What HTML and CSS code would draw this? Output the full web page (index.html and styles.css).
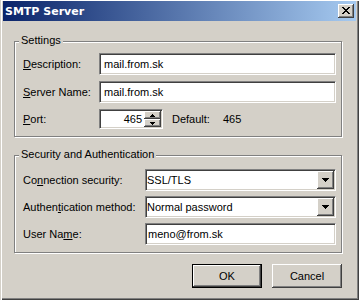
FILE: index.html
```html
<!DOCTYPE html>
<html lang="en">
<head>
    <meta charset="UTF-8">
    <title>SMTP Server</title>
    <link rel="stylesheet" href="styles.css">
</head>
<body>
    <div class="window">
        <div class="titlebar">
            <span class="title">SMTP Server</span>
            <div class="close">
                <svg width="8" height="7" viewBox="0 0 8 7" shape-rendering="crispEdges">
                    <path d="M0 0h2v1h-2zM6 0h2v1h-2zM1 1h2v1h-2zM5 1h2v1h-2zM2 2h4v1h-4zM3 3h2v1h-2zM2 4h4v1h-4zM1 5h2v1h-2zM5 5h2v1h-2zM0 6h2v1h-2zM6 6h2v1h-2z" fill="#000"/>
                </svg>
            </div>
        </div>

        <div class="content">
            <div class="group settings">
                <div class="legend">Settings</div>
                <div class="row">
                    <span class="lbl"><u>D</u>escription:</span>
                    <div class="edit">mail.from.sk</div>
                </div>
                <div class="row">
                    <span class="lbl"><u>S</u>erver Name:</span>
                    <div class="edit">mail.from.sk</div>
                </div>
                <div class="row port">
                    <span class="lbl"><u>P</u>ort:</span>
                    <div class="spin">
                        <span class="val">465</span>
                        <div class="arrows">
                            <div class="arrow-btn">
                                <svg width="5" height="3" viewBox="0 0 5 3" shape-rendering="crispEdges"><path d="M2 0h1v1h1v1h1v1h-5v-1h1v-1h1z" fill="#000"/></svg>
                            </div>
                            <div class="arrow-btn">
                                <svg width="5" height="3" viewBox="0 0 5 3" shape-rendering="crispEdges"><path d="M0 0h5v1h-1v1h-1v1h-1v-1h-1v-1h-1z" fill="#000"/></svg>
                            </div>
                        </div>
                    </div>
                    <span class="default-lbl">Default:</span>
                    <span class="default-val">465</span>
                </div>
            </div>

            <div class="group security">
                <div class="legend">Security and Authentication</div>
                <div class="row">
                    <span class="lbl">Co<u>n</u>nection security:</span>
                    <div class="combo">
                        <span class="combo-text">SSL/TLS</span>
                        <div class="drop">
                            <svg width="7" height="4" viewBox="0 0 7 4" shape-rendering="crispEdges"><path d="M0 0h7v1h-1v1h-1v1h-1v1h-1v-1h-1v-1h-1v-1h-1z" fill="#000"/></svg>
                        </div>
                    </div>
                </div>
                <div class="row">
                    <span class="lbl">Authen<u>t</u>ication method:</span>
                    <div class="combo">
                        <span class="combo-text">Normal password</span>
                        <div class="drop">
                            <svg width="7" height="4" viewBox="0 0 7 4" shape-rendering="crispEdges"><path d="M0 0h7v1h-1v1h-1v1h-1v1h-1v-1h-1v-1h-1v-1h-1z" fill="#000"/></svg>
                        </div>
                    </div>
                </div>
                <div class="row">
                    <span class="lbl">User Na<u>m</u>e:</span>
                    <div class="edit plain">meno@from.sk</div>
                </div>
            </div>

            <div class="buttons">
                <div class="btn default">OK</div>
                <div class="btn">Cancel</div>
            </div>
        </div>
    </div>
</body>
</html>
```

FILE: styles.css
```css
body {
    margin: 0;
    font-family: "Liberation Sans", Arial, sans-serif;
    font-size: 11px;
    color: #000000;
}

/* Dialog frame */
.window {
    width: 359px;
    height: 300px;
    box-sizing: border-box;
    padding: 1px 3px 0 3px;
    background: #d4d0c8;
    box-shadow: inset 1px 0 #d4d0c8, inset 2px 1px #ffffff,
                inset -1px -1px #404040, inset -2px -2px #808080;
}

.titlebar {
    height: 20px;
    display: flex;
    align-items: center;
    justify-content: space-between;
    padding: 0 2px;
    background: linear-gradient(to right, #0a246a, #a6caf0);
    color: #ffffff;
    font: bold 11px "DejaVu Sans", sans-serif;
}

.close {
    width: 16px;
    height: 14px;
    box-sizing: border-box;
    padding: 3px 0 0 4px;
    background: #d4d0c8;
    box-shadow: inset -1px -1px #404040, inset 1px 1px #ffffff,
                inset -2px -2px #808080, inset 2px 2px #d4d0c8;
}

.close svg {
    display: block;
}

.content {
    padding: 20px 14px 0 11px;
}

/* Etched group boxes */
.group {
    position: relative;
    border: 1px solid #808080;
    box-shadow: inset 1px 1px #ffffff, 1px 1px #ffffff;
}

.settings {
    padding: 11px 5px 7px 8px;
}

.security {
    margin-top: 18px;
    padding: 13px 5px 7px 8px;
}

.legend {
    position: absolute;
    top: -8px;
    left: 4px;
    padding: 0 2px;
    line-height: 13px;
    background: #d4d0c8;
}

.row {
    display: flex;
    align-items: center;
    height: 22px;
    margin-bottom: 6px;
}

.security .row {
    margin-bottom: 5px;
}

.group .row:last-child {
    margin-bottom: 0;
}

.row.port {
    height: 20px;
}

.settings .lbl {
    width: 76px;
}

.security .lbl {
    width: 122px;
}

/* Sunken fields */
.edit,
.combo,
.spin {
    box-sizing: border-box;
    background: #ffffff;
    border: 1px solid;
    border-color: #808080 #ffffff #ffffff #808080;
    box-shadow: inset 1px 1px #404040, inset -1px -1px #d4d0c8;
}

.edit {
    flex: 1;
    height: 22px;
    display: flex;
    align-items: center;
    padding-left: 4px;
}

.edit.plain {
    padding-left: 2px;
}

.combo {
    flex: 1;
    height: 22px;
    display: flex;
    align-items: center;
}

.combo-text {
    flex: 1;
    padding-left: 1px;
}

.drop,
.arrow-btn {
    display: flex;
    align-items: center;
    justify-content: center;
    background: #d4d0c8;
    box-shadow: inset -1px -1px #404040, inset 1px 1px #ffffff,
                inset -2px -2px #808080, inset 2px 2px #d4d0c8;
}

.drop {
    width: 17px;
    height: 18px;
    margin-right: 1px;
}

.drop svg,
.arrow-btn svg {
    display: block;
}

.spin {
    width: 64px;
    height: 20px;
    display: flex;
    align-items: center;
}

.spin .val {
    flex: 1;
    text-align: right;
    padding-right: 2px;
}

.arrows {
    width: 17px;
    height: 16px;
    margin-right: 1px;
    display: flex;
    flex-direction: column;
}

.arrow-btn {
    height: 8px;
}

.default-lbl {
    margin-left: 9px;
}

.default-val {
    margin-left: 13px;
}

/* Dialog buttons */
.buttons {
    display: flex;
    justify-content: flex-end;
    gap: 10px;
    margin-top: 11px;
}

.btn {
    width: 70px;
    height: 24px;
    box-sizing: border-box;
    display: flex;
    align-items: center;
    justify-content: center;
    box-shadow: inset -1px -1px #404040, inset 1px 1px #ffffff,
                inset -2px -2px #808080, inset 2px 2px #d4d0c8;
}

.btn.default {
    border: 1px solid #000000;
}
```
